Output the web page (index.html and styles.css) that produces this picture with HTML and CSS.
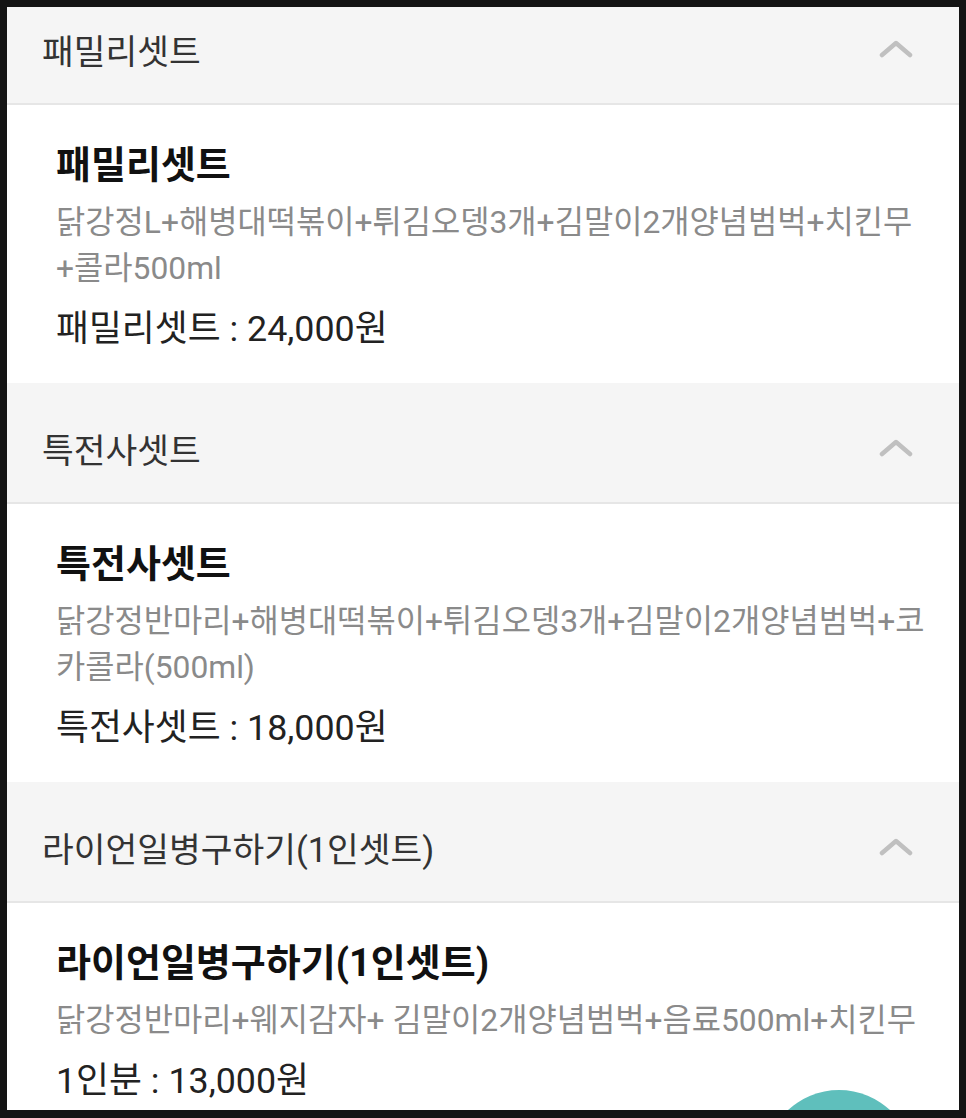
FILE: index.html
```html
<!DOCTYPE html>
<html lang="ko">
<head>
<meta charset="utf-8">
<title>메뉴</title>
<link rel="stylesheet" href="styles.css">
</head>
<body>
<div class="screen">
  <div class="list">
    <section class="group">
      <div class="group-head">
        <span class="group-name">패밀리셋트</span>
        <svg class="chev" viewBox="0 0 34 18" width="34" height="18"><polyline points="3,15 17,3 31,15" fill="none" stroke="#c0c0c0" stroke-width="4.5" stroke-linecap="round" stroke-linejoin="round"/></svg>
      </div>
      <div class="item">
        <div class="item-title">패밀리셋트</div>
        <div class="item-desc">닭강정L+해병대떡볶이+튀김오뎅3개+김말이2개양념범벅+치킨무+콜라500ml</div>
        <div class="item-price">패밀리셋트 : 24,000원</div>
      </div>
    </section>
    <section class="group">
      <div class="group-head">
        <span class="group-name">특전사셋트</span>
        <svg class="chev" viewBox="0 0 34 18" width="34" height="18"><polyline points="3,15 17,3 31,15" fill="none" stroke="#c0c0c0" stroke-width="4.5" stroke-linecap="round" stroke-linejoin="round"/></svg>
      </div>
      <div class="item">
        <div class="item-title">특전사셋트</div>
        <div class="item-desc">닭강정반마리+해병대떡볶이+튀김오뎅3개+김말이2개양념범벅+코카콜라(500ml)</div>
        <div class="item-price">특전사셋트 : 18,000원</div>
      </div>
    </section>
    <section class="group">
      <div class="group-head">
        <span class="group-name">라이언일병구하기(1인셋트)</span>
        <svg class="chev" viewBox="0 0 34 18" width="34" height="18"><polyline points="3,15 17,3 31,15" fill="none" stroke="#c0c0c0" stroke-width="4.5" stroke-linecap="round" stroke-linejoin="round"/></svg>
      </div>
      <div class="item">
        <div class="item-title">라이언일병구하기(1인셋트)</div>
        <div class="item-desc">닭강정반마리+웨지감자+ 김말이2개양념범벅+음료500ml+치킨무</div>
        <div class="item-price">1인분 : 13,000원</div>
      </div>
    </section>
  </div>
  <div class="fab"></div>
</div>
</body>
</html>
```

FILE: styles.css
```css
html, body {
  margin: 0;
  padding: 0;
  background: #141414;
}
body {
  font-family: Roboto, "Noto Sans CJK KR", sans-serif;
}
.screen {
  position: relative;
  margin: 7px;
  width: 952px;
  height: 1103px;
  overflow: hidden;
  background: #ffffff;
}
.list {
  margin-top: -23px;
}
.group-head {
  height: 121px;
  box-sizing: border-box;
  background: #f5f5f5;
  border-bottom: 2px solid #e6e6e6;
  display: flex;
  align-items: center;
  justify-content: space-between;
  padding: 16px 46px 0 35px;
}
.group-name {
  font-size: 34.5px;
  line-height: 44px;
  color: #333333;
}
.chev {
  display: block;
  margin-top: -5px;
}
.item {
  height: 278px;
  box-sizing: border-box;
  padding: 35px 34px 0 49px;
  background: #ffffff;
}
.item-title {
  font-size: 38px;
  font-weight: 700;
  line-height: 50px;
  color: #111111;
}
.item-desc {
  margin-top: 9px;
  font-size: 31.8px;
  line-height: 46px;
  color: #8a8a8a;
}
.item-price {
  margin-top: 15px;
  font-size: 35.8px;
  line-height: 46px;
  color: #222222;
}
.fab {
  position: absolute;
  left: 757px;
  top: 1083px;
  width: 150px;
  height: 150px;
  border-radius: 50%;
  background: #5fbfbc;
}
```
